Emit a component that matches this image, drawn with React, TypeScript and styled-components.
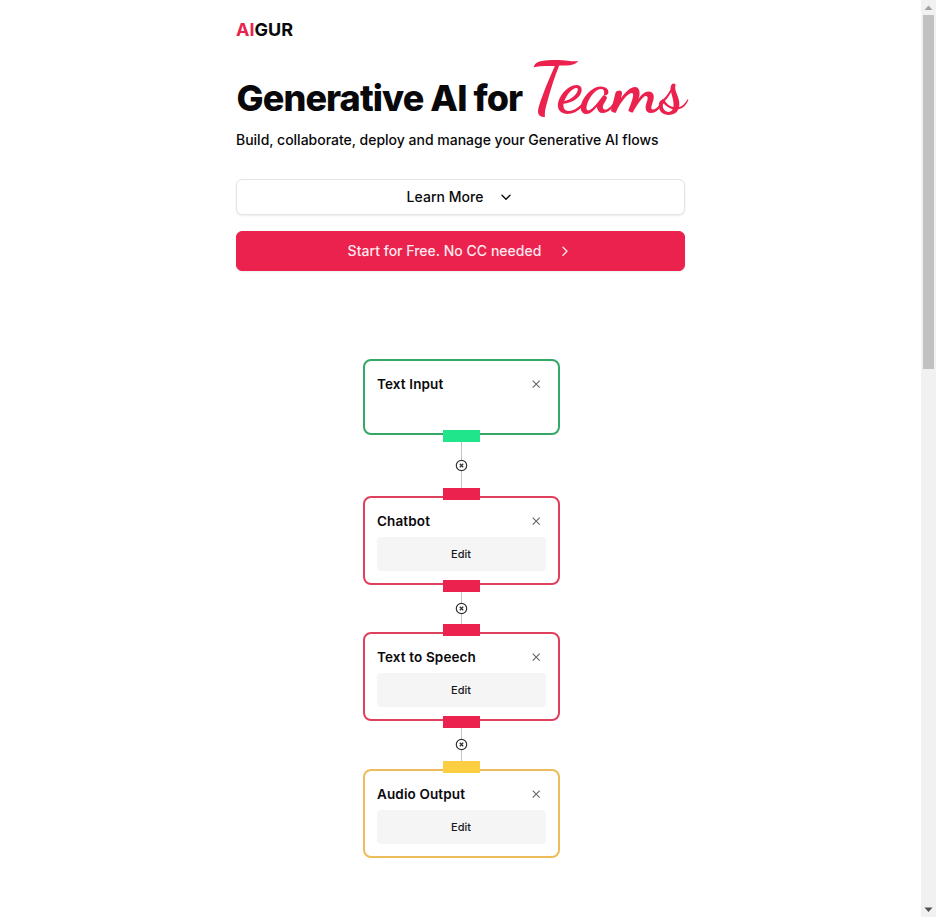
import React from "react";
import styled, { createGlobalStyle } from "styled-components";

const GlobalStyle = createGlobalStyle`
  *, *::before, *::after { box-sizing: border-box; }
  body { margin: 0; background: #fff; overflow: hidden; }
  h1, h2, p { margin: 0; }
  button { font: inherit; padding: 0; }
`;

const crimson = "#eb224e";

const Page = styled.div`
  display: grid;
  grid-template-columns: 1fr 15px;
  height: 917px;
  color: #09090b;
  font-family: Inter, "Liberation Sans", sans-serif;
  overflow: hidden;
`;

const Main = styled.main`
  width: 449px;
  margin: 0 auto;
  padding-top: 16px;
`;

const Brand = styled.div`
  height: 28px;
  font-size: 18px;
  line-height: 28px;
  font-weight: 700;
  white-space: nowrap;
  span { color: ${crimson}; }
`;

const Headline = styled.h1`
  display: flex;
  align-items: baseline;
  height: 84px;
  padding: 8px 0 0 0.5px;
  font-size: 36px;
  line-height: 72px;
  font-weight: 800;
  letter-spacing: -0.9px;
  white-space: pre;
`;

const Script = styled.span`
  margin-left: -1px;
  color: ${crimson};
  font-family: "Dancing Script", "Liberation Serif", cursive;
  font-size: 72px;
  font-weight: 700;
  letter-spacing: -0.9px;
  line-height: 72px;
`;

const Tagline = styled.p`
  height: 24px;
  font-size: 14px;
  line-height: 24px;
  font-weight: 500;
  letter-spacing: -0.01px;
  white-space: nowrap;
`;

const Actions = styled.div`
  display: flex;
  flex-direction: column;
  gap: 16px;
  margin-top: 27px;
`;

const Action = styled.button<{ $primary?: boolean }>`
  display: flex;
  align-items: center;
  justify-content: center;
  gap: ${(p) => (p.$primary ? 16 : 15)}px;
  height: ${(p) => (p.$primary ? 40 : 36)}px;
  padding-bottom: 1px;
  border: 1px solid ${(p) => (p.$primary ? crimson : "#e4e4e7")};
  border-radius: 6px;
  background: ${(p) => (p.$primary ? crimson : "#fff")};
  color: ${(p) => (p.$primary ? "#fde8ed" : "#09090b")};
  font-size: 14px;
  line-height: 20px;
  font-weight: 500;
  letter-spacing: 0.02px;
  box-shadow: 0 1px 2px rgba(0, 0, 0, 0.08);
`;

const Flow = styled.section`
  display: flex;
  flex-direction: column;
  align-items: center;
  margin: 88px 0 0 1px;
`;

const Node = styled.article<{ $color: string; $height: number }>`
  position: relative;
  width: 197px;
  height: ${(p) => p.$height}px;
  padding: 11px 12px;
  border: 2px solid ${(p) => p.$color};
  border-radius: 8px;
  background: #fff;
`;

const NodeHeader = styled.header`
  display: flex;
  align-items: center;
  justify-content: space-between;
  height: 23px;
  padding: 0 5px 0 0.5px;
`;

const NodeTitle = styled.h2`
  font-size: 13.5px;
  line-height: 22px;
  font-weight: 600;
  letter-spacing: 0.13px;
  white-space: nowrap;
`;

const EditButton = styled.button`
  display: block;
  width: 169px;
  height: 34px;
  margin-top: 5px;
  border: 0;
  border-radius: 4px;
  background: #f5f5f5;
  color: #18181b;
  font-size: 11px;
  font-weight: 500;
`;

const Port = styled.i<{ $color: string; $side: "top" | "bottom" }>`
  position: absolute;
  z-index: 1;
  left: 78px;
  ${(p) => p.$side}: ${(p) => (p.$side === "top" ? "-10px" : "-9.4px")};
  width: 37px;
  height: 12px;
  background: ${(p) => p.$color};
`;

const Link = styled.div<{ $height: number; $offset: number }>`
  display: flex;
  justify-content: center;
  width: 13px;
  height: ${(p) => p.$height}px;
  padding-top: ${(p) => p.$offset}px;
  background: linear-gradient(#c4c4c4, #c4c4c4) center / 1px 100% no-repeat;
`;

const Scrollbar = styled.aside`
  display: flex;
  flex-direction: column;
  align-items: center;
  justify-content: space-between;
  background: #f1f1f1;
`;

const ScrollHead = styled.div`
  display: flex;
  flex-direction: column;
  align-items: center;
`;

const Thumb = styled.div`
  width: 11px;
  height: 354px;
  background: #c1c1c1;
`;

const CloseIcon = () => (
  <svg width="10" height="10" viewBox="0 0 10 10" fill="none" stroke="#666" strokeWidth="1.1">
    <path d="M1.7 1.7l7 7m0-7l-7 7" />
  </svg>
);

const UnlinkIcon = () => (
  <svg width="13" height="13" viewBox="0 0 13 13" fill="none" stroke="#333">
    <circle cx="6.5" cy="6.5" r="5.2" fill="#fff" strokeWidth="1.2" />
    <path d="M4.8 4.8l3.4 3.4m0-3.4L4.8 8.2" strokeWidth="1.3" />
  </svg>
);

const Chevron = ({ down = false }: { down?: boolean }) => (
  <svg width="16" height="16" viewBox="0 0 16 16" fill="none" stroke="currentColor" strokeWidth="1.35" strokeLinecap="round" strokeLinejoin="round">
    <path d={down ? "M4 6.3l4 4 4-4" : "M6 4.3l4 4-4 4"} />
  </svg>
);

const ScrollArrow = ({ down = false }: { down?: boolean }) => (
  <svg width="15" height="15" viewBox="0 0 15 15">
    <path d={down ? "M3.5 5.5h8L7.5 10z" : "M3.5 10h8L7.5 5.5z"} fill={down ? "#505050" : "#a3a3a3"} />
  </svg>
);

type NodeData = {
  title: string;
  border: string;
  height: number;
  top?: string;
  bottom?: string;
  link?: [number, number];
};

const nodes: NodeData[] = [
  { title: "Text Input", border: "#35a867", height: 76, bottom: "#20e58a", link: [61, 24] },
  { title: "Chatbot", border: "#df405d", height: 89, top: crimson, bottom: crimson, link: [47, 17] },
  { title: "Text to Speech", border: "#df405d", height: 89, top: crimson, bottom: crimson, link: [48, 17] },
  { title: "Audio Output", border: "#edbc5b", height: 89, top: "#fccf42" },
];

export default function App() {
  return (
    <>
      <GlobalStyle />
      <Page>
        <Main>
          <Brand><span>AI</span>GUR</Brand>
          <Headline>Generative AI for <Script>Teams</Script></Headline>
          <Tagline>Build, collaborate, deploy and manage your Generative AI flows</Tagline>
          <Actions>
            <Action>Learn More <Chevron down /></Action>
            <Action $primary>Start for Free. No CC needed <Chevron /></Action>
          </Actions>
          <Flow>
            {nodes.map((n) => (
              <React.Fragment key={n.title}>
                <Node $color={n.border} $height={n.height}>
                  {n.top && <Port $color={n.top} $side="top" />}
                  <NodeHeader>
                    <NodeTitle>{n.title}</NodeTitle>
                    <CloseIcon />
                  </NodeHeader>
                  {n.top && <EditButton>Edit</EditButton>}
                  {n.bottom && <Port $color={n.bottom} $side="bottom" />}
                </Node>
                {n.link && (
                  <Link $height={n.link[0]} $offset={n.link[1]}><UnlinkIcon /></Link>
                )}
              </React.Fragment>
            ))}
          </Flow>
        </Main>
        <Scrollbar>
          <ScrollHead>
            <ScrollArrow />
            <Thumb />
          </ScrollHead>
          <ScrollArrow down />
        </Scrollbar>
      </Page>
    </>
  );
}
